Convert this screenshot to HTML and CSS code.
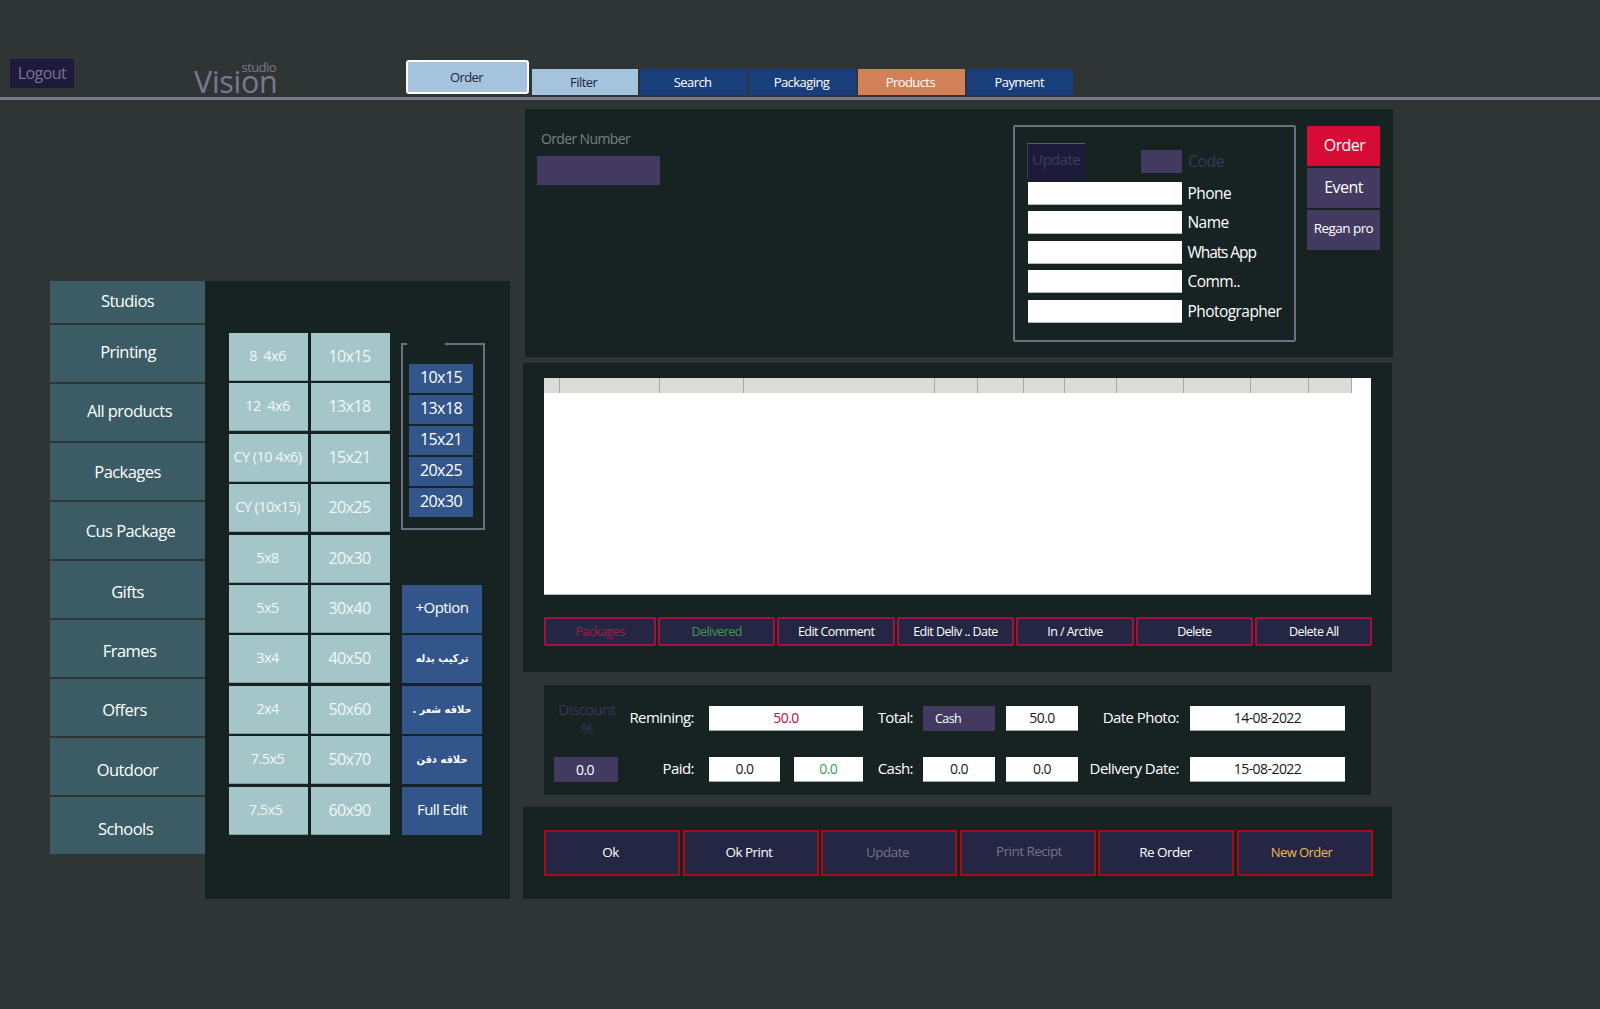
FILE: index.html
```html
<!DOCTYPE html>
<html lang="en">
<head>
<meta charset="utf-8">
<title>Vision Studio</title>
<link rel="stylesheet" href="styles.css">
</head>
<body>
<header class="topbar">
  <a class="logout">Logout</a>
  <div class="logo"><span class="logo-sub">studio</span><span class="logo-main">Vision</span></div>
  <nav class="tabs">
    <a class="tab tab-active">Order</a>
    <a class="tab tab-light">Filter</a>
    <a class="tab tab-blue">Search</a>
    <a class="tab tab-blue">Packaging</a>
    <a class="tab tab-orange">Products</a>
    <a class="tab tab-blue">Payment</a>
  </nav>
</header>
<main class="main">
  <section class="left">
    <ul class="side">
      <li class="side-item side-first">Studios</li>
      <li class="side-item">Printing</li>
      <li class="side-item">All products</li>
      <li class="side-item">Packages</li>
      <li class="side-item">Cus Package</li>
      <li class="side-item">Gifts</li>
      <li class="side-item">Frames</li>
      <li class="side-item">Offers</li>
      <li class="side-item">Outdoor</li>
      <li class="side-item">Schools</li>
    </ul>
    <div class="catalog">
      <div class="sizes">
        <a class="size size-sm">8&nbsp; 4x6</a><a class="size">10x15</a>
        <a class="size size-sm">12&nbsp; 4x6</a><a class="size">13x18</a>
        <a class="size size-sm">CY (10 4x6)</a><a class="size">15x21</a>
        <a class="size size-sm">CY (10x15)</a><a class="size">20x25</a>
        <a class="size size-sm">5x8</a><a class="size">20x30</a>
        <a class="size size-sm">5x5</a><a class="size">30x40</a>
        <a class="size size-sm">3x4</a><a class="size">40x50</a>
        <a class="size size-sm">2x4</a><a class="size">50x60</a>
        <a class="size size-sm">7.5x5</a><a class="size">50x70</a>
        <a class="size size-sm size-shift">7.5x5</a><a class="size">60x90</a>
      </div>
      <div class="extras">
        <div class="quick">
          <a class="quick-btn">10x15</a>
          <a class="quick-btn">13x18</a>
          <a class="quick-btn">15x21</a>
          <a class="quick-btn">20x25</a>
          <a class="quick-btn">20x30</a>
        </div>
        <div class="options">
          <a class="option">+Option</a>
          <a class="option option-ar" dir="rtl">تركيب بدله</a>
          <a class="option option-ar" dir="rtl">حلاقه شعر .</a>
          <a class="option option-ar" dir="rtl">حلاقه دقن</a>
          <a class="option">Full Edit</a>
        </div>
      </div>
    </div>
  </section>
  <section class="right">
    <div class="panel customer">
      <div class="order-no">
        <label class="order-label">Order Number</label>
        <div class="order-input"></div>
      </div>
      <div class="customer-side">
        <div class="form-box">
          <div class="form-head">
            <a class="update-btn">Update</a>
            <span class="code-swatch"></span>
            <span class="code-label">Code</span>
          </div>
          <div class="form-row"><span class="input"></span><label class="form-label">Phone</label></div>
          <div class="form-row"><span class="input"></span><label class="form-label">Name</label></div>
          <div class="form-row"><span class="input"></span><label class="form-label form-label-tight">Whats App</label></div>
          <div class="form-row"><span class="input"></span><label class="form-label">Comm..</label></div>
          <div class="form-row"><span class="input"></span><label class="form-label">Photographer</label></div>
        </div>
        <div class="kind">
          <a class="kind-btn kind-red">Order</a>
          <a class="kind-btn">Event</a>
          <a class="kind-btn kind-sm">Regan pro</a>
        </div>
      </div>
    </div>
    <div class="panel items">
      <div class="sheet">
        <div class="sheet-head">
          <span></span><span></span><span></span><span></span><span></span><span></span>
          <span></span><span></span><span></span><span></span><span></span><span></span>
        </div>
      </div>
      <div class="actions">
        <a class="action txt-crimson">Packages</a>
        <a class="action txt-green">Delivered</a>
        <a class="action">Edit Comment</a>
        <a class="action">Edit Deliv .. Date</a>
        <a class="action">In / Arctive</a>
        <a class="action">Delete</a>
        <a class="action">Delete All</a>
      </div>
    </div>
    <div class="totals">
      <div class="discount-label"><span>Discount<br>%</span></div>
      <div class="t-label">Remining:</div>
      <div class="t-group t-g1"><span class="field-wide field txt-crimson">50.0</span></div>
      <div class="t-label">Total:</div>
      <div class="t-group t-g2"><span class="field-cash">Cash</span><span class="field">50.0</span></div>
      <div class="t-label">Date Photo:</div>
      <div class="t-group t-g3"><span class="field field-wide">14-08-2022</span></div>

      <div class="discount-value">0.0</div>
      <div class="t-label">Paid:</div>
      <div class="t-group t-g1"><span class="field field-a">0.0</span><span class="field field-b txt-green">0.0</span></div>
      <div class="t-label">Cash:</div>
      <div class="t-group t-g2"><span class="field">0.0</span><span class="field">0.0</span></div>
      <div class="t-label">Delivery Date:</div>
      <div class="t-group t-g3"><span class="field field-wide">15-08-2022</span></div>
    </div>
    <div class="panel footer-bar">
      <a class="big-btn">Ok</a>
      <a class="big-btn">Ok Print</a>
      <a class="big-btn txt-dim">Update</a>
      <a class="big-btn txt-dim big-up">Print Recipt</a>
      <a class="big-btn big-center">Re Order</a>
      <a class="big-btn txt-amber big-left">New Order</a>
    </div>
  </section>
</main>
</body>
</html>
```
FILE: styles.css
```css
* { box-sizing: border-box; }
html, body { margin: 0; padding: 0; }
body {
  width: 1600px;
  height: 1009px;
  overflow: hidden;
  background: #2f3535;
  color: #fff;
  font-family: "Open Sans", "Noto Sans", sans-serif;
  letter-spacing: -0.035em;
}
ul { list-style: none; margin: 0; padding: 0; }

/* top bar */
.topbar {
  height: 100px;
  border-bottom: 3px solid #7b7890;
  display: flex;
  align-items: flex-start;
  padding-left: 10px;
}
.logout {
  margin-top: 59px;
  width: 64px;
  height: 29px;
  background: #1e1a3b;
  color: #79768f;
  font-size: 16px;
  line-height: 28px;
  text-align: center;
}
.logo {
  position: relative;
  margin: 71px 0 0 120px;
  width: 86px;
  height: 21px;
}
.logo-main {
  display: block;
  font-size: 30.5px;
  line-height: 21px;
  color: #7b7890;
  letter-spacing: -0.01em;
}
.logo-sub {
  position: absolute;
  right: 4px;
  top: -9px;
  font-size: 13px;
  line-height: 11px;
  color: #7b7890;
}
.tabs {
  margin-left: 126px;
  display: flex;
  align-items: flex-end;
  height: 95px;
  gap: 2.5px;
}
.tab {
  width: 106.4px;
  height: 26px;
  padding-right: 2px;
  font-size: 13px;
  line-height: 26px;
  text-align: center;
}
.tab-active {
  width: 123px;
  height: 34px;
  margin-bottom: 1px;
  background: #a3c4dc;
  border: 2px solid #fff;
  border-radius: 3px;
  color: #1e2440;
  line-height: 30px;
}
.tab-light { background: #a3c4dc; color: #1e2440; }
.tab-blue { background: #183f7b; }
.tab-orange { background: #d28058; }

/* layout */
.main {
  display: flex;
  align-items: flex-start;
  padding-left: 50px;
}
.right {
  width: 870px;
  margin-left: 13px;
  padding-top: 9px;
}
.panel { background: #172222; }

/* left block */
.left {
  display: flex;
  align-items: flex-start;
  margin-top: 181px;
  width: 460px;
}
.side {
  width: 155px;
  display: flex;
  flex-direction: column;
  gap: 2px;
}
.side-item {
  height: 57px;
  background: #3b5c65;
  font-size: 16.5px;
  line-height: 57px;
  text-align: center;
}
.side-first { height: 42px; line-height: 39px; }
.side-item:nth-child(2) { line-height: 53px; padding-left: 1px; }
.side-item:nth-child(3) { line-height: 53px; padding-left: 4px; }
.side-item:nth-child(5) { padding-left: 6px; }
.side-item:nth-child(6) { line-height: 61px; }
.side-item:nth-child(7) { line-height: 61px; padding-left: 4px; }
.side-item:nth-child(8) { line-height: 61px; padding-right: 6px; }
.side-item:nth-child(9) { line-height: 63px; }
.side-item:nth-child(10) { line-height: 63px; padding-right: 4px; }
.catalog {
  width: 305px;
  height: 618px;
  background: #172222;
  display: flex;
  padding: 52px 0 0 24px;
  gap: 11px;
}
.sizes {
  display: grid;
  grid-template-columns: 79px 79px;
  grid-auto-rows: 48px;
  column-gap: 3px;
  row-gap: 2.4px;
  align-content: start;
}
.size {
  background: #a4c6c8;
  border-bottom: 1px solid #7f9fa0;
  color: #f2f7f7;
  font-size: 16px;
  line-height: 47px;
  padding-right: 2px;
  text-align: center;
  white-space: nowrap;
}
.size-sm { font-size: 14.5px; line-height: 46px; }
.size-shift { padding-right: 6px; }
.extras {
  display: flex;
  flex-direction: column;
  justify-content: space-between;
  height: 501.6px;
  width: 84px;
}
.quick {
  margin-top: 10px;
  height: 187px;
  width: 84px;
  border: 2px solid #6b7080;
  border-top: 0;
  background:
    linear-gradient(#6b7080, #6b7080) left top / 4px 2px no-repeat,
    linear-gradient(#6b7080, #6b7080) right top / 38px 2px no-repeat;
  padding: 21px 0 0 6px;
  display: flex;
  flex-direction: column;
  gap: 2px;
}
.quick-btn {
  width: 64px;
  height: 29px;
  background: #32558a;
  font-size: 16px;
  line-height: 26px;
  text-align: center;
}
.options {
  display: flex;
  flex-direction: column;
  gap: 2.4px;
  width: 80px;
  margin-left: 1px;
}
.option {
  height: 48px;
  background: #32558a;
  font-size: 15px;
  line-height: 45px;
  text-align: center;
}
.option-ar {
  font-family: "DejaVu Sans Condensed", "DejaVu Sans", sans-serif;
  font-stretch: condensed;
  font-weight: 700;
  font-size: 11px;
  line-height: 47px;
  letter-spacing: 0;
}

/* customer panel */
.customer {
  margin-left: 2px;
  width: 868px;
  height: 248px;
  padding: 16px 13px 0 12px;
  display: flex;
  justify-content: space-between;
}
.order-no { display: flex; flex-direction: column; }
.order-label {
  margin: 5px 0 0 4px;
  height: 26px;
  color: #7b7d88;
  font-size: 14px;
  line-height: 18px;
  letter-spacing: -0.045em;
}
.order-input {
  width: 123px;
  height: 29px;
  background: #433a62;
}
.customer-side { display: flex; align-items: flex-start; gap: 11px; }
.form-box {
  width: 283px;
  height: 217px;
  border: 2px solid #6e7081;
  border-radius: 2px;
  padding: 16px 0 0 13px;
}
.form-head {
  display: flex;
  align-items: center;
  height: 36px;
  margin: 0 0 3px -1px;
}
.update-btn {
  width: 58px;
  height: 36px;
  background: #1e1a3b;
  border-top: 1px solid #5c5a72;
  border-left: 1px solid #3f3d58;
  color: #3f3a60;
  font-size: 15px;
  line-height: 30px;
  padding-left: 4px;
}
.code-swatch {
  width: 41px;
  height: 23px;
  margin: 1px 0 0 56px;
  background: #433a62;
}
.code-label {
  margin: 0 0 0 6px;
  color: #3b375c;
  font-size: 16px;
}
.form-row {
  display: flex;
  align-items: center;
  height: 23px;
  margin-bottom: 6.4px;
  gap: 5.5px;
}
.input {
  width: 154px;
  height: 23px;
  background: #fff;
  border-bottom: 1px solid #b5b8ba;
}
.form-label { font-size: 15.5px; line-height: 22px; height: 23px; white-space: nowrap; }
.form-label-tight { letter-spacing: -0.07em; }
.kind { display: flex; flex-direction: column; gap: 2px; padding-top: 1px; }
.kind-btn {
  width: 73px;
  height: 40px;
  background: #433a62;
  font-size: 16px;
  line-height: 38px;
  text-align: center;
}
.kind-red { background: #d60b36; padding-left: 2px; }
.kind-sm { font-size: 13.5px; line-height: 36px; }

/* items panel */
.items {
  margin-top: 6px;
  width: 869px;
  height: 309px;
  padding: 15px 21px 0;
}
.sheet {
  width: 827px;
  height: 217px;
  background: #fff;
  border-bottom: 1px solid #b9bcbc;
}
.sheet-head {
  display: grid;
  grid-template-columns: 16px 100px 84px 191px 43px 46px 41px 52px 67px 67px 58px 43px;
  width: 808px;
  height: 15px;
  background: #dcdbd8;
}
.sheet-head span { border-right: 1px solid #a8a8a6; }
.actions {
  display: grid;
  grid-template-columns: 112px repeat(6, 1fr);
  gap: 2px;
  width: 828.5px;
  margin-top: 22px;
}
.action {
  height: 29px;
  background: #252644;
  border: 2px solid #a3123f;
  border-radius: 2px;
  font-size: 12.5px;
  line-height: 26px;
  text-align: center;
  white-space: nowrap;
}

/* totals */
.totals {
  width: 827px;
  height: 110px;
  margin: 13px 0 0 21px;
  background: #172222;
  padding: 21px 0 0 10px;
  display: grid;
  grid-template-columns: 64px 76px 169px 50px 165px 101px 166px;
  grid-template-rows: 25px 25px;
  row-gap: 26px;
}
.discount-label {
  display: flex;
  align-items: center;
  justify-content: center;
  height: 25px;
  padding-left: 2px;
  color: #3a3658;
  font-size: 15px;
  line-height: 19px;
  text-align: center;
}
.discount-value {
  background: #433a62;
  font-size: 14px;
  line-height: 26px;
  padding-right: 2px;
  text-align: center;
}
.t-label {
  font-size: 15px;
  line-height: 23px;
  text-align: right;
  white-space: nowrap;
}
.t-group { display: flex; justify-content: space-between; }
.t-g1 { padding-left: 15px; }
.t-g2 { padding-left: 10px; }
.t-g3 { padding-left: 11px; }
.field {
  width: 72px;
  height: 25px;
  background: #fff;
  border-bottom: 1px solid #9fa4a6;
  color: #14181c;
  font-size: 14px;
  line-height: 23px;
  text-align: center;
}
.field-a { width: 71px; }
.field-b { width: 69.5px; }
.field-wide { width: 100%; }
.field-cash {
  width: 72px;
  height: 25px;
  background: #433a62;
  font-size: 12.5px;
  line-height: 26px;
  padding-left: 12px;
}
.field.txt-crimson { color: #b50d44; }
.field.txt-green { color: #3f9a52; }
.txt-crimson { color: #b0134a; }
.txt-green { color: #3f9a52; }

/* bottom */
.footer-bar {
  margin-top: 12px;
  width: 869px;
  height: 92px;
  padding: 23px 19.5px 0 21px;
  display: grid;
  grid-template-columns: repeat(6, 1fr);
  grid-auto-rows: 46px;
  gap: 2.5px;
}
.big-btn {
  background: #252644;
  border: 2px solid #a50d14;
  font-size: 13.5px;
  line-height: 41px;
  padding-right: 3px;
  text-align: center;
}
.big-up { line-height: 38px; padding-right: 0; padding-left: 3px; }
.big-center { padding-right: 1px; }
.big-left { padding-right: 6px; font-size: 13px; }
.txt-dim { color: #737486; }
.txt-amber { color: #efb850; }
```
